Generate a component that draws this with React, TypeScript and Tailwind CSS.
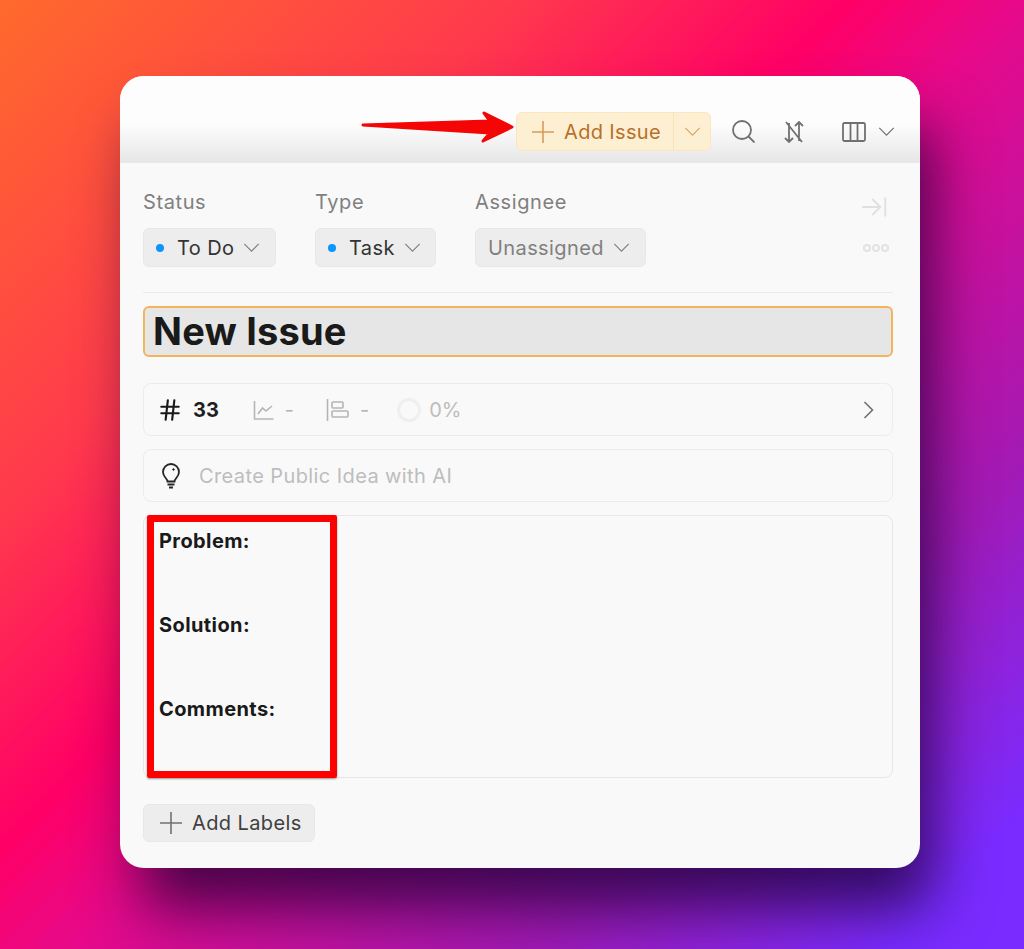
import React from "react";
import { ArrowRightToLine, Hash } from "lucide-react";

const Chevron = ({ className = "" }: { className?: string }) => (
  <svg className={className} viewBox="0 0 18 10" fill="none" stroke="currentColor" strokeWidth="1.3">
    <path d="M1 1l8 8 8-8" />
  </svg>
);

const PlusIcon = ({ className = "" }: { className?: string }) => (
  <svg className={className} viewBox="0 0 22 22" fill="none" stroke="currentColor" strokeWidth="1.6">
    <path d="M11 0v22M0 11h22" />
  </svg>
);

const Select = ({
  label,
  value,
  dot,
  width,
}: {
  label: string;
  value: string;
  dot?: boolean;
  width: string;
}) => (
  <div className="flex flex-col">
    <div className="h-[25px] text-[20px] leading-[25px] tracking-[0.6px] text-[#808080]">{label}</div>
    <div
      className={`mt-[13px] flex h-[39px] items-center rounded-md border border-[#e8e8e8] bg-[#ededed] pl-[12px] text-[20px] tracking-[0.4px] ${width}`}
    >
      {dot && <span className="mr-[13px] h-[8px] w-[8px] rounded-full bg-[#0a95ff]" />}
      <span className={dot ? "text-[#333333]" : "text-[#808080]"}>{value}</span>
      <Chevron className="ml-[9px] h-[9px] w-[17px] text-[#808080]" />
    </div>
  </div>
);

export default function App() {
  return (
    <div className="flex h-[949px] w-[1024px] items-start overflow-hidden bg-[linear-gradient(135deg,#ff6a2c_0%,#ff3a4c_26%,#ff0066_43%,#e6098a_52%,#a31ab5_75%,#7a2bff_93%)] pl-[120px] pt-[76px] font-['Inter',sans-serif]">
      <div className="relative flex h-[792px] w-[800px] flex-col overflow-hidden rounded-[24px] bg-[#f9f9f9] shadow-[16px_45px_60px_-5px_rgba(20,0,50,0.75)]">
        {/* Toolbar */}
        <div className="flex h-[87px] items-start justify-end bg-gradient-to-b from-[#fdfdfd] from-55% to-[#e6e6e6] pr-[25px] pt-[36px]">
          <div className="flex h-[39px] items-center">
            <div className="flex h-[39px] w-[195px] items-center rounded-md border border-[#fbe6bf] bg-[#fdefd2] text-[#b96f2a]">
              <PlusIcon className="ml-[15px] h-[22px] w-[22px] text-[#d99a5c]" />
              <span className="ml-[10px] text-[20px] tracking-[0.35px]">Add Issue</span>
              <div className="ml-[12px] flex h-full flex-1 items-center justify-center border-l border-[#f8e2b8]">
                <Chevron className="h-[9px] w-[17px] text-[#d9a566]" />
              </div>
            </div>
            <svg className="ml-[21px] h-[23px] w-[23px] text-[#707070]" viewBox="0 0 23 23" fill="none" stroke="currentColor" strokeWidth="1.8">
              <circle cx="10" cy="10" r="9" />
              <path d="M16.5 16.5L22.5 22.5" />
            </svg>
            <svg className="ml-[29px] h-[22px] w-[20px] text-[#707070]" viewBox="0 0 20 22" fill="none" stroke="currentColor" strokeWidth="1.8">
              <path d="M5 2v19M1 17l4 4 4-4M15 20V1M11 5l4-4 4 4M2 1l16 20" />
            </svg>
            <svg className="ml-[38px] h-[20px] w-[24px] text-[#707070]" viewBox="0 0 24 20" fill="none" stroke="currentColor" strokeWidth="1.8">
              <rect x="1" y="1" width="22" height="18" rx="1.5" />
              <path d="M8.5 1v18M15.5 1v18" />
            </svg>
            <Chevron className="ml-[12px] h-[9px] w-[17px] text-[#707070]" />
          </div>
        </div>

        {/* Body */}
        <div className="flex flex-1 flex-col pl-[23px] pr-[27px] pt-[27px]">
          <div className="flex items-start">
            <Select label="Status" value="To Do" dot width="w-[133px]" />
            <div className="ml-[39px]">
              <Select label="Type" value="Task" dot width="w-[121px]" />
            </div>
            <div className="ml-[39px]">
              <Select label="Assignee" value="Unassigned" width="w-[171px]" />
            </div>
            <div className="ml-auto mr-[4px] flex flex-col items-end">
              <ArrowRightToLine className="mt-[2px] h-[30px] w-[30px] text-[#e0e0e0]" strokeWidth={1.5} />
              <div className="mt-[22px] flex gap-[1px]">
                <span className="h-[8px] w-[8px] rounded-full border-2 border-[#e2e2e2]" />
                <span className="h-[8px] w-[8px] rounded-full border-2 border-[#e2e2e2]" />
                <span className="h-[8px] w-[8px] rounded-full border-2 border-[#e2e2e2]" />
              </div>
            </div>
          </div>

          <div className="mt-[25px] h-[1px] bg-[#e9e9e9]" />

          <div className="mt-[13px] flex h-[51px] items-center rounded-md border-2 border-[#f3b45e] bg-[#e6e6e6] pl-[8px] text-[38px] font-bold tracking-[0.2px] text-[#1a1a1a]">
            New Issue
          </div>

          <div className="mt-[26px] flex h-[53px] items-center rounded-lg border border-[#ececec] pl-[13px] pr-[18px]">
            <Hash className="h-[26px] w-[26px] text-[#1a1a1a]" strokeWidth={2} />
            <span className="ml-[10px] text-[20px] font-bold text-[#1f1f1f]">33</span>
            <svg className="ml-[34px] h-[22px] w-[22px] text-[#b5b5b5]" viewBox="0 0 22 22" fill="none" stroke="currentColor" strokeWidth="1.6">
              <path d="M1.5 2v18h19M5 15l4.5-6 3.5 3 6-5" />
            </svg>
            <span className="ml-[10px] text-[20px] text-[#b5b5b5]">-</span>
            <svg className="ml-[32px] h-[24px] w-[24px] text-[#b5b5b5]" viewBox="0 0 24 24" fill="none" stroke="currentColor" strokeWidth="1.6">
              <path d="M1.5 1v22" />
              <rect x="6" y="4" width="11" height="6" rx="1" />
              <rect x="6" y="13" width="16" height="6" rx="1" />
            </svg>
            <span className="ml-[10px] text-[20px] text-[#b5b5b5]">-</span>
            <span className="ml-[28px] h-[24px] w-[24px] rounded-full border-[3px] border-[#efefef]" />
            <span className="ml-[8px] text-[20px] text-[#bdbdbd]">0%</span>
            <svg className="ml-auto h-[18px] w-[11px] text-[#707070]" viewBox="0 0 11 18" fill="none" stroke="currentColor" strokeWidth="1.6">
              <path d="M1.5 1l8 8-8 8" />
            </svg>
          </div>

          <div className="mt-[13px] flex h-[53px] items-center rounded-lg border border-[#ececec] pl-[18px]">
            <svg className="h-[26px] w-[18px] text-[#262626]" viewBox="0 0 18 26" fill="none" stroke="currentColor" strokeWidth="1.8">
              <path d="M5.5 18.5c0-3-4.5-4.5-4.5-9.5a8 8 0 0 1 16 0c0 5-4.5 6.5-4.5 9.5z" />
              <path d="M5.5 21.5h7M7 24.5h4" />
              <circle cx="11.5" cy="6.5" r="0.8" fill="currentColor" strokeWidth="1" />
            </svg>
            <span className="ml-[19px] text-[20px] tracking-[0.4px] text-[#bdbdbd]">Create Public Idea with AI</span>
          </div>

          <div className="mt-[13px] flex h-[263px] flex-col rounded-lg border border-[#e6e6e6] pl-[15px] pt-[13px] text-[20px] font-bold leading-[24px] tracking-[0.4px] text-[#1a1a1a]">
            <div>Problem:</div>
            <div className="mt-[60px]">Solution:</div>
            <div className="mt-[60px]">Comments:</div>
          </div>

          <div className="mt-[26px] flex h-[38px] w-[172px] items-center rounded-md border border-[#e8e8e8] bg-[#ededed] pl-[16px] text-[20px] tracking-[0.4px] text-[#404040]">
            <PlusIcon className="h-[22px] w-[22px] text-[#707070]" />
            <span className="ml-[10px]">Add Labels</span>
          </div>
        </div>

        {/* Annotations */}
        <div className="absolute left-[27px] top-[439px] h-[263px] w-[190px] rounded-[2px] border-[7px] border-[#ff0000] shadow-[0_1px_2px_rgba(0,0,0,0.4)]" />
        <svg className="absolute left-[240px] top-[32px] h-[40px] w-[156px]" viewBox="0 0 156 40">
          <path d="M3 17 L130 13 L124 5 L152 19 L123 33 L130 25 Z" fill="#f40606" stroke="#f40606" strokeLinejoin="round" strokeWidth="3" />
        </svg>
      </div>
    </div>
  );
}
